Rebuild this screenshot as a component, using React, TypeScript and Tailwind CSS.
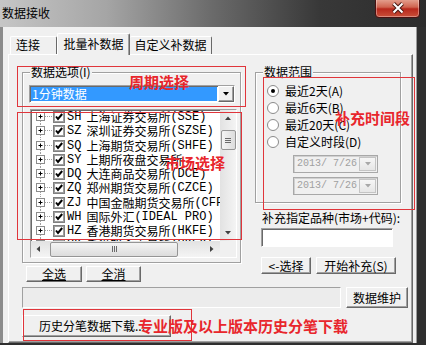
import React from 'react'

const mono = "font-['Liberation_Mono','Noto_Sans_CJK_SC',monospace]"
const raised = 'border border-t-white border-l-white border-r-[#696969] border-b-[#696969] shadow-[inset_-1px_-1px_0_#a0a0a0] bg-[#f0f0f0]'
const sunken = 'border border-t-[#a0a0a0] border-l-[#a0a0a0] border-r-white border-b-white shadow-[inset_1px_1px_0_#696969]'
const etched = 'border border-[#a0a0a0] shadow-[inset_1px_1px_0_#ffffff,1px_1px_0_#ffffff]'
const redBox = 'absolute border border-[#e0353b]'
const redText = 'absolute text-[15px] leading-[20px] font-bold text-[#e8262c]'

const markets = [
  ['SH', '上海证券交易所', '(SSE)'],
  ['SZ', '深圳证券交易所', '(SZSE)'],
  ['SQ', '上海期货交易所', '(SHFE)'],
  ['SY', '上期所夜盘交易所', ''],
  ['DQ', '大连商品交易所', '(DCE)'],
  ['ZQ', '郑州期货交易所', '(CZCE)'],
  ['ZJ', '中国金融期货交易所', '(CFFEX)'],
  ['WH', '国际外汇', '(IDEAL PRO)'],
  ['HZ', '香港期货交易所', '(HKFE)'],
  ['HK', '香港联合交易所', '(HKEX)'],
]

const Check = () => (
  <svg width="12" height="12" viewBox="0 0 12 12" className="shrink-0">
    <rect x="0.5" y="0.5" width="11" height="11" fill="#fff" stroke="#808080" />
    <rect x="1.5" y="1.5" width="9" height="9" fill="none" stroke="#404040" strokeOpacity="0.5" />
    <path d="M3 5.5 L5 8 L9.2 3" fill="none" stroke="#000" strokeWidth="2" />
  </svg>
)

const Radio = ({ on }: { on?: boolean }) => (
  <svg width="12" height="12" viewBox="0 0 12 12" className="shrink-0">
    <circle cx="6" cy="6" r="5.5" fill="#fff" stroke="#8a8a8a" />
    {on && <circle cx="6" cy="6" r="2" fill="#000" />}
  </svg>
)

const TreeRow = ({ code, name, tag }: { code: string; name: string; tag: string }) => (
  <div className="flex items-center h-[14.25px] whitespace-nowrap">
    <svg width="18" height="14" viewBox="0 0 18 14" className="shrink-0">
      <line x1="5.5" y1="0" x2="5.5" y2="2" stroke="#a0a0a0" strokeDasharray="1 1" />
      <line x1="5.5" y1="11" x2="5.5" y2="14" stroke="#a0a0a0" strokeDasharray="1 1" />
      <rect x="1.5" y="2.5" width="8" height="8" fill="#fff" stroke="#8c8c8c" />
      <line x1="3.5" y1="6.5" x2="7.5" y2="6.5" stroke="#000" />
      <line x1="5.5" y1="4.5" x2="5.5" y2="8.5" stroke="#000" />
      <line x1="10" y1="6.5" x2="18" y2="6.5" stroke="#a0a0a0" strokeDasharray="1 1" />
    </svg>
    <Check />
    <span className={`${mono} text-[12px] ml-[2px]`}>{code}</span>
    <span className="ml-[5px]">{name}</span>
    <span className={`${mono} text-[12px]`}>{tag}</span>
  </div>
)

const Arrow = ({ dir, color = '#404040' }: { dir: 'up' | 'down' | 'left' | 'right'; color?: string }) => {
  const d = {
    up: 'M1 5 L4 1.5 L7 5 Z',
    down: 'M1 2 L4 5.5 L7 2 Z',
    left: 'M5 1 L1.5 4 L5 7 Z',
    right: 'M2 1 L5.5 4 L2 7 Z',
  }[dir]
  return (
    <svg width="8" height="8" viewBox="0 0 8 8">
      <path d={d} fill={color} />
    </svg>
  )
}

const DatePick = () => (
  <div className="flex w-[85px] h-[18px] border border-[#a8a8a8] bg-[#f0f0f0] shadow-[inset_1px_1px_0_#d0d0d0]">
    <span className={`${mono} text-[10px] text-[#a0a0a0] pl-[3px] leading-[16px] flex-1`}>2013/ 7/26</span>
    <div className="w-[17px] my-[1px] mr-[1px] border border-[#c4c4c4] bg-[linear-gradient(#f6f6f6,#e6e6e6)] flex items-center justify-center">
      <Arrow dir="down" color="#a8a8a8" />
    </div>
  </div>
)

export default function App() {
  return (
    <div className="relative w-[426px] h-[345px] overflow-hidden flex flex-col bg-[#3a3a3a] text-[12px] leading-[14px] text-black font-['Noto_Sans_CJK_SC',sans-serif]">
      {/* title bar */}
      <div className="h-[27px] shrink-0 flex items-start bg-[linear-gradient(90deg,#c6c6c6_0%,#a5a5a5_25%,#6a6a6a_50%,#383838_75%,#2c2c2c_100%)]">
        <span className="mt-[6px] ml-[2px]">数据接收</span>
        <div className="ml-auto mr-[6px] -mt-[2px] w-[45px] h-[20px] rounded-b-[4px] border border-[#4a1010] bg-[linear-gradient(#e6a594,#d06450_45%,#b8281c_55%,#c9503a)] shadow-[inset_0_0_0_1px_rgba(255,255,255,0.35)] flex items-center justify-center">
          <svg width="14" height="12" viewBox="0 0 14 12">
            <path d="M2.5 1.5 L11.5 10.5 M11.5 1.5 L2.5 10.5" stroke="#4a1a14" strokeWidth="4" />
            <path d="M2.5 1.5 L11.5 10.5 M11.5 1.5 L2.5 10.5" stroke="#fff" strokeWidth="2" />
          </svg>
        </div>
      </div>

      <div className="flex flex-1 min-h-0">
        <div className="w-[3px] bg-[#8c8c8c]" />
        <div className="flex-1 bg-[#f0f0f0] pt-[5px] flex flex-col">
          {/* tabs */}
          <div className="relative z-10 flex items-end h-[22px] pl-[7px]">
            <div className="w-[47px] h-[18px] pl-[5px] pt-[1px] border border-b-0 border-t-white border-l-white border-r-[#696969] rounded-t-[2px]">连接</div>
            <div className="w-[73px] h-[22px] -mb-px pt-[3px] text-center bg-[#f0f0f0] border border-b-0 border-t-white border-l-white border-r-[#696969] rounded-t-[2px] shadow-[inset_-1px_0_0_#a0a0a0]">批量补数据</div>
            <div className="w-[82px] h-[18px] pt-[1px] text-center border border-b-0 border-t-white border-r-[#696969] border-l-0 rounded-t-[2px]">自定义补数据</div>
          </div>

          {/* panel */}
          <div className={`ml-[5px] w-[405px] flex-1 ${raised} pl-[13px] pt-[17px]`}>
            <div className="flex items-start">
              {/* left column */}
              <div className="w-[219px] flex flex-col">
                <div className={`relative h-[191px] ${etched}`}>
                  <span className="absolute left-[7px] -top-[8px] px-[1px] bg-[#f0f0f0]">数据选项(I)</span>
                  <div className={`ml-[6px] mt-[12px] w-[206px] h-[18px] flex bg-white ${sunken}`}>
                    <div className="flex-1 m-[1px] bg-[#3399ff] text-white pl-[1px] leading-[14px]">1分钟数据</div>
                    <div className={`w-[16px] flex items-center justify-center ${raised}`}>
                      <Arrow dir="down" color="#000" />
                    </div>
                  </div>
                  <div className={`ml-[7px] mt-[6px] w-[207px] h-[149px] flex flex-col bg-white ${sunken}`}>
                    <div className="flex flex-1 min-h-0">
                      <div className="flex-1 overflow-hidden pl-[4px]">
                        {markets.map(m => (
                          <TreeRow key={m[0]} code={m[0]} name={m[1]} tag={m[2]} />
                        ))}
                      </div>
                      <div className="w-[16px] flex flex-col items-center bg-[linear-gradient(90deg,#e2e2e2,#f4f4f4)]">
                        <div className="h-[17px] flex items-center justify-center"><Arrow dir="up" /></div>
                        <div className="mt-[3px] w-[15px] h-[20px] rounded-[2px] border border-[#959595] bg-[linear-gradient(90deg,#f4f4f4,#dcdcdc)] flex flex-col items-center justify-center gap-[1px]">
                          <div className="w-[6px] h-px bg-[#6a6a6a]" />
                          <div className="w-[6px] h-px bg-[#6a6a6a]" />
                          <div className="w-[6px] h-px bg-[#6a6a6a]" />
                        </div>
                        <div className="flex-1" />
                        <div className="h-[17px] flex items-center justify-center"><Arrow dir="down" /></div>
                      </div>
                    </div>
                    <div className="flex h-[16px]">
                      <div className="flex-1 flex items-center bg-[linear-gradient(#e2e2e2,#f4f4f4)]">
                        <div className="w-[16px] flex items-center justify-center"><Arrow dir="left" /></div>
                        <div className="ml-[3px] w-[128px] h-[15px] rounded-[2px] border border-[#959595] bg-[linear-gradient(#f4f4f4,#dcdcdc)] flex items-center justify-center gap-[1px]">
                          <div className="h-[6px] w-px bg-[#6a6a6a]" />
                          <div className="h-[6px] w-px bg-[#6a6a6a]" />
                          <div className="h-[6px] w-px bg-[#6a6a6a]" />
                        </div>
                        <div className="flex-1" />
                        <div className="w-[16px] flex items-center justify-center"><Arrow dir="right" /></div>
                      </div>
                      <div className="w-[16px] bg-[#f0f0f0]" />
                    </div>
                  </div>
                </div>
                <div className="flex mt-[3px] ml-[4px] gap-[4px]">
                  <button className={`w-[56px] h-[16px] leading-[12px] underline ${raised}`}>全选</button>
                  <button className={`w-[55px] h-[16px] leading-[12px] underline ${raised}`}>全消</button>
                </div>
              </div>

              {/* right column */}
              <div className="ml-[14px] w-[146px] flex flex-col">
                <div className={`relative h-[131px] ${etched}`}>
                  <span className="absolute left-[7px] -top-[8px] px-[1px] bg-[#f0f0f0]">数据范围</span>
                  <div className="ml-[11px] mt-[9px] flex flex-col">
                    <div className="flex items-center h-[17px] gap-[6px]"><Radio on /><span>最近2天(A)</span></div>
                    <div className="flex items-center h-[17px] gap-[6px]"><Radio /><span>最近6天(B)</span></div>
                    <div className="flex items-center h-[17px] gap-[6px]"><Radio /><span>最近20天(C)</span></div>
                    <div className="flex items-center h-[17px] gap-[6px]"><Radio /><span>自定义时段(D)</span></div>
                  </div>
                  <div className="ml-[37px] mt-[5px] flex flex-col gap-[4px]">
                    <DatePick />
                    <DatePick />
                  </div>
                </div>
                <span className="mt-[8px] ml-[7px] whitespace-nowrap">补充指定品种(市场+代码):</span>
                <div className={`mt-[3px] ml-[6px] w-[132px] h-[19px] bg-white ${sunken}`} />
                <div className="flex mt-[10px] ml-[6px] gap-[5px]">
                  <button className={`w-[50px] h-[17px] leading-[12px] ${raised}`}>&lt;-选择</button>
                  <button className={`w-[80px] h-[17px] leading-[12px] ${raised}`}>开始补充(S)</button>
                </div>
              </div>
            </div>

            <div className="flex mt-[5px]">
              <div className="w-[319px] h-[21px] border border-t-[#a0a0a0] border-l-[#a0a0a0] border-r-white border-b-white bg-[#ececec]" />
              <button className={`ml-[5px] w-[62px] h-[21px] leading-[14px] ${raised}`}>数据维护</button>
            </div>
            <div className="flex mt-[7px]">
              <button className={`w-[149px] h-[22px] leading-[14px] text-left pl-[16px] ${raised}`}>历史分笔数据下载...</button>
            </div>
          </div>
        </div>
        <div className="w-[10px] bg-[#2f2f2f] border-l border-[#9a9a9a]" />
      </div>
      <div className="h-[2px] shrink-0 bg-[#2f2f2f]" />

      {/* red annotations */}
      <div className={`${redBox} left-[17px] top-[66px] w-[229px] h-[41px]`} />
      <div className={`${redBox} left-[17px] top-[112px] w-[225px] h-[128px]`} />
      <div className={`${redBox} left-[263px] top-[77px] w-[152px] h-[133px]`} />
      <div className={`${redBox} left-[23px] top-[309px] w-[169px] h-[32px]`} />
      <span className={`${redText} left-[129px] top-[72px]`}>周期选择</span>
      <span className={`${redText} left-[165px] top-[153px]`}>市场选择</span>
      <span className={`${redText} left-[335px] top-[108px]`}>补充时间段</span>
      <span className={`${redText} left-[138px] top-[316px] whitespace-nowrap`}>专业版及以上版本历史分笔下载</span>
    </div>
  )
}
